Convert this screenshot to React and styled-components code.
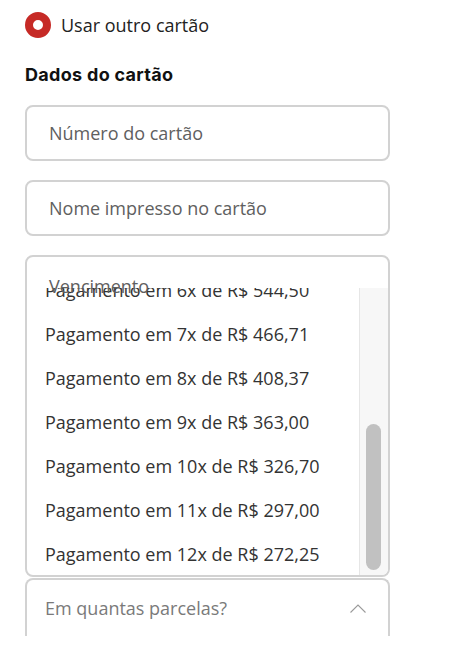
import React from "react";
import styled, { createGlobalStyle } from "styled-components";

const GlobalStyle = createGlobalStyle`
  body {
    margin: 0;
    background: #fff;
    font-family: "Open Sans", "Noto Sans", sans-serif;
  }
`;

const installments = [
  { n: 6, value: "544,50" },
  { n: 7, value: "466,71" },
  { n: 8, value: "408,37" },
  { n: 9, value: "363,00" },
  { n: 10, value: "326,70" },
  { n: 11, value: "297,00" },
  { n: 12, value: "272,25" },
];

export default function App() {
  return (
    <>
      <GlobalStyle />
      <Page>
        <RadioRow>
          <RadioDot />
          <RadioLabel>Usar outro cartão</RadioLabel>
        </RadioRow>
        <Heading>Dados do cartão</Heading>
        <Field>
          <Placeholder>Número do cartão</Placeholder>
        </Field>
        <Field>
          <Placeholder>Nome impresso no cartão</Placeholder>
        </Field>
        <ExpiryField>
          <FloatingLabel>Vencimento</FloatingLabel>
          <OptionList>
            <Options>
              {installments.map((item) => (
                <Option key={item.n}>
                  Pagamento em {item.n}x de R$ {item.value}
                </Option>
              ))}
            </Options>
            <Track>
              <Thumb />
            </Track>
          </OptionList>
        </ExpiryField>
        <Select>
          <Placeholder $muted $left={18}>Em quantas parcelas?</Placeholder>
          <Chevron viewBox="0 0 16 9" fill="none">
            <path d="M0.5 8.5 L8 1 L15.5 8.5" stroke="#9a9a9a" strokeWidth="1.1" />
          </Chevron>
        </Select>
      </Page>
    </>
  );
}

const Page = styled.div`
  display: flex;
  flex-direction: column;
  width: 365px;
  height: 636px;
  padding-left: 25px;
  overflow: hidden;
`;

const RadioRow = styled.div`
  display: flex;
  align-items: center;
  gap: 10px;
  height: 26px;
  margin-top: 12px;
`;

const RadioDot = styled.span`
  box-sizing: border-box;
  width: 26px;
  height: 26px;
  border-radius: 50%;
  border: 8px solid #c62a26;
  background: #fff;
`;

const RadioLabel = styled.span`
  font-size: 18px;
  color: #222;
`;

const Heading = styled.h3`
  margin: 25px 0 18px;
  font-family: "Inter", "Noto Sans", sans-serif;
  font-weight: 700;
  font-size: 18px;
  line-height: 24px;
  color: #111;
  letter-spacing: 0.3px;
`;

const Field = styled.div`
  box-sizing: border-box;
  display: flex;
  align-items: center;
  height: 56px;
  margin-bottom: 19px;
  border: 2px solid #d2d2d2;
  border-radius: 8px;
`;

const Placeholder = styled.span`
  padding-left: ${(p) => p.$left ?? 22}px;
  font-size: 18px;
  color: ${(p) => (p.$muted ? "#7a7a7a" : "#606060")};
`;

const ExpiryField = styled.div`
  box-sizing: border-box;
  position: relative;
  height: 322px;
  padding-top: 17px;
  border: 2px solid #d2d2d2;
  border-radius: 8px;
  line-height: 24px;
`;

const FloatingLabel = styled(Placeholder)`
  position: relative;
  z-index: 1;
`;

const OptionList = styled.div`
  position: absolute;
  top: 31px;
  left: 0;
  right: 0;
  bottom: 0;
  display: flex;
  overflow: hidden;
  border-radius: 0 0 6px 6px;
`;

const Options = styled.ul`
  flex: 1;
  margin: -20px 0 0;
  padding: 0;
  list-style: none;
`;

const Option = styled.li`
  display: flex;
  align-items: center;
  height: 44px;
  padding-left: 18px;
  font-size: 18px;
  color: #333;
`;

const Track = styled.div`
  box-sizing: border-box;
  width: 29px;
  padding: 136px 0 0 6px;
  background: #f7f7f7;
  border-left: 1px solid #e6e6e6;
`;

const Thumb = styled.div`
  width: 15px;
  height: 146px;
  border-radius: 8px;
  background: #c1c1c1;
`;

const Select = styled.div`
  box-sizing: border-box;
  display: flex;
  align-items: center;
  justify-content: space-between;
  flex-shrink: 0;
  height: 58px;
  margin-top: 1px;
  padding-right: 22px;
  border: 2px solid #d2d2d2;
  border-bottom: none;
  border-radius: 8px 8px 0 0;
`;

const Chevron = styled.svg`
  width: 16px;
  height: 9px;
`;
